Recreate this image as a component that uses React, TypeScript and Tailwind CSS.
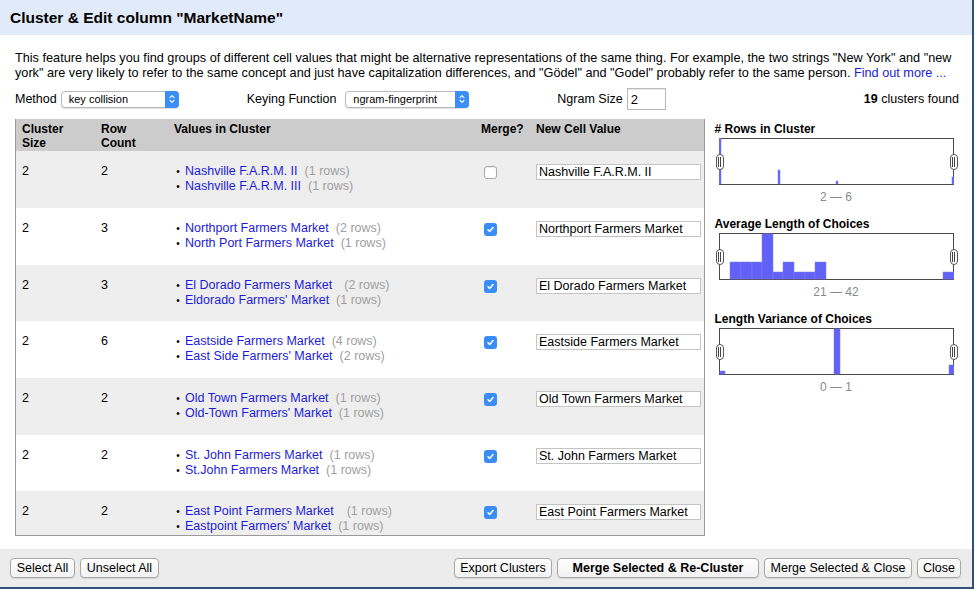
import React from "react";

type Value = { name: string; rows: number; gap: string };
type Cluster = { size: number; count: number; values: Value[]; merge: boolean; newValue: string };

const clusters: Cluster[] = [
  {
    size: 2,
    count: 2,
    values: [
      { name: "Nashville F.A.R.M. II", rows: 1, gap: "ml-[7px]" },
      { name: "Nashville F.A.R.M. III", rows: 1, gap: "ml-[7px]" },
    ],
    merge: false,
    newValue: "Nashville F.A.R.M. II",
  },
  {
    size: 2,
    count: 3,
    values: [
      { name: "Northport Farmers Market", rows: 2, gap: "ml-[7px]" },
      { name: "North Port Farmers Market", rows: 1, gap: "ml-[7px]" },
    ],
    merge: true,
    newValue: "Northport Farmers Market",
  },
  {
    size: 2,
    count: 3,
    values: [
      { name: "El Dorado Farmers Market", rows: 2, gap: "ml-[12px]" },
      { name: "Eldorado Farmers' Market", rows: 1, gap: "ml-[7px]" },
    ],
    merge: true,
    newValue: "El Dorado Farmers Market",
  },
  {
    size: 2,
    count: 6,
    values: [
      { name: "Eastside Farmers Market", rows: 4, gap: "ml-[7px]" },
      { name: "East Side Farmers' Market", rows: 2, gap: "ml-[7px]" },
    ],
    merge: true,
    newValue: "Eastside Farmers Market",
  },
  {
    size: 2,
    count: 2,
    values: [
      { name: "Old Town Farmers Market", rows: 1, gap: "ml-[7px]" },
      { name: "Old-Town Farmers' Market", rows: 1, gap: "ml-[7px]" },
    ],
    merge: true,
    newValue: "Old Town Farmers Market",
  },
  {
    size: 2,
    count: 2,
    values: [
      { name: "St. John Farmers Market", rows: 1, gap: "ml-[7px]" },
      { name: "St.John Farmers Market", rows: 1, gap: "ml-[7px]" },
    ],
    merge: true,
    newValue: "St. John Farmers Market",
  },
  {
    size: 2,
    count: 2,
    values: [
      { name: "East Point Farmers Market", rows: 1, gap: "ml-[13px]" },
      { name: "Eastpoint Farmers' Market", rows: 1, gap: "ml-[7px]" },
    ],
    merge: true,
    newValue: "East Point Farmers Market",
  },
];

const rowHeights = ["h-[57px]", "h-[57px]", "h-[56px]", "h-[57px]", "h-[57px]", "h-[56px]", "h-[57px]"];

type Bar = { x: number; w: number; top: number };

const histograms: { title: string; height: number; bars: Bar[]; range: string }[] = [
  {
    title: "# Rows in Cluster",
    height: 47,
    bars: [
      { x: 0, w: 2, top: 0 },
      { x: 59, w: 2, top: 32 },
      { x: 117, w: 2, top: 43 },
      { x: 233, w: 2, top: 39 },
    ],
    range: "2 — 6",
  },
  {
    title: "Average Length of Choices",
    height: 47,
    bars: [
      { x: 11, w: 11, top: 29 },
      { x: 22, w: 11, top: 29 },
      { x: 33, w: 10, top: 29 },
      { x: 43, w: 11, top: 1 },
      { x: 54, w: 10, top: 39 },
      { x: 64, w: 11, top: 29 },
      { x: 75, w: 11, top: 39 },
      { x: 86, w: 10, top: 39 },
      { x: 96, w: 11, top: 29 },
      { x: 224, w: 11, top: 39 },
    ],
    range: "21 — 42",
  },
  {
    title: "Length Variance of Choices",
    height: 47,
    bars: [
      { x: 1, w: 5, top: 43 },
      { x: 115, w: 6, top: 1 },
      { x: 230, w: 5, top: 37 },
    ],
    range: "0 — 1",
  },
];

function Checkbox({ checked }: { checked: boolean }) {
  if (!checked) {
    return <span className="block h-[13px] w-[13px] rounded-[3px] border border-[#a9a9a9] bg-white shadow-[inset_0_1px_1px_rgba(0,0,0,0.08)]" />;
  }
  return (
    <span className="flex h-[13px] w-[13px] items-center justify-center rounded-[3px] bg-[#3a8cf6]">
      <svg width="9" height="9" viewBox="0 0 9 9">
        <path d="M2 4.7 L3.7 6.4 L7 2.5" stroke="white" strokeWidth="1.5" fill="none" strokeLinecap="round" strokeLinejoin="round" />
      </svg>
    </span>
  );
}

function MacSelect({ value, width }: { value: string; width: string }) {
  return (
    <div className={`flex h-[17px] items-center rounded-[4px] border border-[#b8b8b8] bg-white shadow-[0_1px_1px_rgba(0,0,0,0.12)] ${width}`}>
      <span className="flex-1 pl-[7px] text-[11px] leading-none text-black">{value}</span>
      <span className="flex h-[17px] w-[14px] items-center justify-center rounded-r-[4px] bg-[#3b8ef7] -mr-px">
        <svg width="6" height="10" viewBox="0 0 6 10">
          <path d="M1 3.6 L3 1.6 L5 3.6 M1 6.4 L3 8.4 L5 6.4" stroke="white" strokeWidth="1.1" fill="none" strokeLinecap="round" strokeLinejoin="round" />
        </svg>
      </span>
    </div>
  );
}

function Handle() {
  return (
    <span className="flex h-[16px] w-[8px] items-center justify-center gap-[1px] rounded-[4px] border border-[#555] bg-white">
      <span className="h-[10px] w-px bg-[#444]" />
      <span className="h-[10px] w-px bg-[#444]" />
    </span>
  );
}

function Histogram({ title, height, bars, range }: { title: string; height: number; bars: Bar[]; range: string }) {
  return (
    <div className="flex flex-col">
      <div className="text-[12px] font-bold leading-[14px] text-black">{title}</div>
      <div className="relative ml-[4px] mt-[2px] h-[47px] w-[235px]">
        <svg width="235" height={height} viewBox={`0 0 235 ${height}`} className="block">
          <rect x="0.5" y="0.5" width="234" height={height - 1} fill="white" stroke="#4a4a4a" />
          {bars.map((b, i) => (
            <rect key={i} x={b.x} y={b.top} width={b.w} height={height - b.top - 1} fill="#6161f7" stroke="#7d7dfb" strokeWidth="0.5" />
          ))}
        </svg>
        <span className="absolute left-[-3px] top-[16px]">
          <Handle />
        </span>
        <span className="absolute right-[-4px] top-[16px]">
          <Handle />
        </span>
      </div>
      <div className="ml-[4px] mt-[5px] w-[235px] text-center text-[12px] leading-[14px] text-[#8a8a8a]">{range}</div>
    </div>
  );
}

function Button({ label, width, bold }: { label: string; width: string; bold?: boolean }) {
  return (
    <button
      className={`h-[20px] rounded-[4px] border border-[#a8a8a8] bg-gradient-to-b from-white to-[#f1f1f1] text-[12.5px] leading-none text-black shadow-[0_1px_1px_rgba(0,0,0,0.1)] ${width} ${bold ? "font-bold" : ""}`}
    >
      {label}
    </button>
  );
}

export default function App() {
  return (
    <div className="h-[590px] w-[975px] bg-white font-['Liberation_Sans',Arial,sans-serif] text-black">
      <div className="flex h-[589px] w-[974px] flex-col border-b-2 border-r-2 border-[#33507a]">
        {/* Title */}
        <div className="flex h-[35px] items-center bg-[#e1eaf8] px-[10px]">
          <h1 className="text-[15.5px] font-bold">Cluster &amp; Edit column "MarketName"</h1>
        </div>

        {/* Body */}
        <div className="flex flex-1 flex-col pl-[15px] pr-[13px] pt-[16px]">
          <p className="text-[12.7px] leading-[15px]">
            This feature helps you find groups of different cell values that might be alternative representations of the same thing. For example, the two strings "New York" and "new
            <br />
            york" are very likely to refer to the same concept and just have capitalization differences, and "Gödel" and "Godel" probably refer to the same person.{" "}
            <a className="text-[#1c1cd8]">Find out more ...</a>
          </p>

          <div className="mt-[7px] flex h-[22px] items-center text-[12.5px]">
            <span>Method</span>
            <span className="ml-[4px]">
              <MacSelect value="key collision" width="w-[118px]" />
            </span>
            <span className="ml-[68px]">Keying Function</span>
            <span className="ml-[9px]">
              <MacSelect value="ngram-fingerprint" width="w-[124px]" />
            </span>
            <span className="ml-[88px]">Ngram Size</span>
            <input
              readOnly
              value="2"
              className="ml-[4px] h-[22px] w-[39px] border border-[#b9b9b9] bg-white px-[3px] text-[13px] shadow-[inset_0_1px_1px_rgba(0,0,0,0.1)] outline-none"
            />
            <span className="ml-auto">
              <b>19</b> clusters found
            </span>
          </div>

          <div className="mt-[9px] flex">
            {/* Cluster table */}
            <div className="h-[417px] w-[691px] overflow-hidden border-b border-l border-r border-[#9a9a9a] text-[12.5px]">
              <div className="grid h-[32px] grid-cols-[79px_73px_307px_55px_177px] bg-[#cccccc] pt-[3px] text-[12px] font-bold leading-[14px]">
                <div className="pl-[6px]">
                  Cluster
                  <br />
                  Size
                </div>
                <div className="pl-[6px]">
                  Row
                  <br />
                  Count
                </div>
                <div className="pl-[6px]">Values in Cluster</div>
                <div className="pl-[6px]">Merge?</div>
                <div className="pl-[6px]">New Cell Value</div>
              </div>
              {clusters.map((c, i) => (
                <div
                  key={i}
                  className={`grid shrink-0 grid-cols-[79px_73px_307px_55px_177px] pt-[13px] leading-[15px] ${rowHeights[i]} ${i % 2 === 0 ? "bg-[#eeeeee]" : "bg-white"}`}
                >
                  <div className="pl-[6px]">{c.size}</div>
                  <div className="pl-[6px]">{c.count}</div>
                  <div className="pl-[6px]">
                    {c.values.map((v, j) => (
                      <div key={j} className="flex items-center whitespace-nowrap">
                        <span className="mr-[3px] w-[8px] text-center text-[10px]">•</span>
                        <a className="text-[#1c1cd8]">{v.name}</a>
                        <span className={`${v.gap} text-[#a0a0a0]`}>({v.rows} rows)</span>
                      </div>
                    ))}
                  </div>
                  <div className="pl-[9px] pt-[2px]">
                    <Checkbox checked={c.merge} />
                  </div>
                  <div className="pl-[6px]">
                    <input
                      readOnly
                      value={c.newValue}
                      className="h-[16px] w-[165px] border border-[#c4c4c4] bg-white px-[2px] text-[12.5px] leading-none outline-none"
                    />
                  </div>
                </div>
              ))}
            </div>

            {/* Facets */}
            <div className="ml-[10px] flex w-[245px] flex-col gap-[13px] pt-[3px]">
              {histograms.map((h) => (
                <Histogram key={h.title} {...h} />
              ))}
            </div>
          </div>
        </div>

        {/* Footer */}
        <div className="flex h-[38px] items-center bg-[#ececec] pl-[10px] pr-[11px]">
          <div className="flex gap-[5px]">
            <Button label="Select All" width="w-[65px]" />
            <Button label="Unselect All" width="w-[79px]" />
          </div>
          <div className="ml-auto flex gap-[5px]">
            <Button label="Export Clusters" width="w-[98px]" />
            <Button label="Merge Selected & Re-Cluster" width="w-[202px]" bold />
            <Button label="Merge Selected & Close" width="w-[148px]" />
            <Button label="Close" width="w-[44px]" />
          </div>
        </div>
      </div>
    </div>
  );
}
